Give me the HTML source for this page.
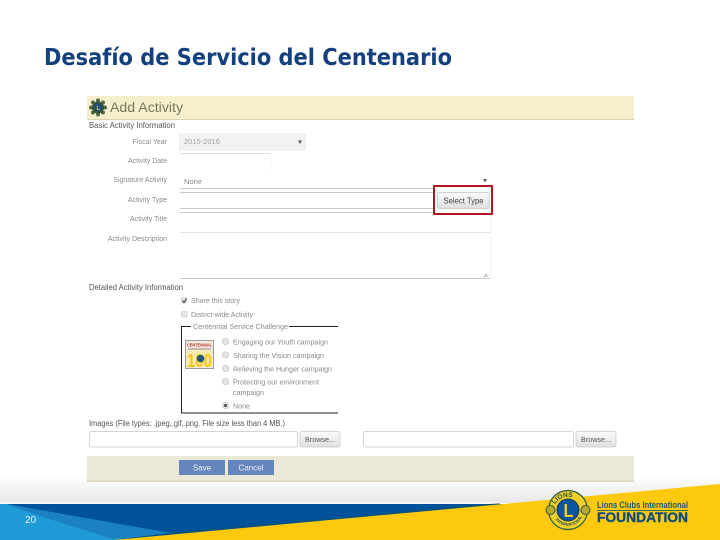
<!DOCTYPE html>
<html lang="es">
<head>
<meta charset="utf-8">
<title>Desafío de Servicio del Centenario</title>
<style>
html,body{margin:0;padding:0;background:#fff;width:720px;height:540px;overflow:hidden}
svg{display:block}
text{font-family:"Liberation Sans",sans-serif}
.l{font-size:7px;fill:#8a8a8a;text-anchor:end}
.h{font-size:8px;fill:#555}
.t{font-size:7.5px;fill:#8a8a8a}
.f{fill:#fff;stroke:#c8c8c8;stroke-width:.8}
.ln{stroke:#c9c9c9;stroke-width:1}
.fa{stroke:#f5f5f5;stroke-width:1}
.radio{fill:#e4e4e4;stroke:#c4c4c4;stroke-width:.7}
</style>
</head>
<body>
<svg width="720" height="540" viewBox="0 0 720 540" xmlns="http://www.w3.org/2000/svg">
<defs>
<linearGradient id="g" x1="0" y1="0" x2="0" y2="1">
<stop offset="0" stop-color="#ffffff"/>
<stop offset="1" stop-color="#e7e7e9"/>
</linearGradient>
<linearGradient id="btn" x1="0" y1="0" x2="0" y2="1">
<stop offset="0" stop-color="#fbfbfb"/>
<stop offset="1" stop-color="#dfdfdf"/>
</linearGradient>
<filter id="b" filterUnits="userSpaceOnUse" x="0" y="0" width="720" height="540"><feGaussianBlur stdDeviation="0.35"/></filter>
</defs>

<rect width="720" height="540" fill="#fff"/>

<text x="44" y="65" font-size="23" font-weight="700" fill="#14417e" style="font-family:'DejaVu Sans',sans-serif" textLength="408" lengthAdjust="spacingAndGlyphs">Desafío de Servicio del Centenario</text>

<!-- footer background -->
<rect x="0" y="476" width="720" height="27" fill="url(#g)"/>
<rect x="0" y="502" width="500" height="2" fill="#f7f7f7"/>
<rect x="0" y="504" width="720" height="36" fill="#00539b"/>
<polygon points="0,504 6,504 170,533 113,540 0,540" fill="#1e9ad6"/>
<polygon points="6,504 170,533 113,539 40,516" fill="#1b80c2"/>
<polygon points="113,540 720,484 720,540" fill="#fdc90c"/>
<polygon points="113,539.500 170,533 500,503 500,504 170,534" fill="#17503f" opacity=".55"/>
<text x="25" y="523" font-size="10" fill="#e6f3fb">20</text>

<g filter="url(#b)">
<!-- panel header -->
<rect x="87" y="96" width="547" height="23" fill="#f5efcd"/>
<rect x="87" y="119" width="547" height="1" fill="#d9d3b0"/>
<g fill="#4f6b3c">
<circle cx="98" cy="100.500" r="2"/><circle cx="103" cy="102.500" r="2"/><circle cx="105" cy="107.500" r="2"/><circle cx="103" cy="112.500" r="2"/><circle cx="98" cy="114.500" r="2"/><circle cx="93" cy="112.500" r="2"/><circle cx="91" cy="107.500" r="2"/><circle cx="93" cy="102.500" r="2"/>
</g>
<circle cx="98" cy="107.500" r="6" fill="#33503f"/>
<circle cx="98" cy="107.500" r="3.800" fill="#1c4f86"/>
<text x="96.500" y="110" font-size="6" font-weight="700" fill="#d8c650">L</text>
<text x="110" y="112" font-size="13.500" fill="#77775f" textLength="73" lengthAdjust="spacingAndGlyphs">Add Activity</text>

<text x="89" y="128" class="h" textLength="86" lengthAdjust="spacingAndGlyphs">Basic Activity Information</text>

<!-- labels -->
<text x="167" y="144" class="l">Fiscal Year</text>
<text x="167" y="163" class="l">Activity Date</text>
<text x="167" y="182" class="l">Signature Activity</text>
<text x="167" y="202" class="l">Activity Type</text>
<text x="167" y="221" class="l">Activity Title</text>
<text x="167" y="241" class="l">Activity Description</text>

<!-- fiscal year -->
<rect x="179.500" y="134" width="126" height="16" fill="#f2f2f2" stroke="#e3e3e3" stroke-width=".6"/>
<text x="184" y="144" font-size="7.500" fill="#a0a0a0">2015-2016</text>
<polygon points="298,140.500 302,140.500 300,144" fill="#555"/>

<!-- date -->
<line x1="180" y1="153.500" x2="270" y2="153.500" stroke="#dddddd"/>
<line x1="270.500" y1="154" x2="270.500" y2="170" class="fa"/>

<!-- signature -->
<text x="184" y="184" font-size="7.500" fill="#8a8a8a">None</text>
<polygon points="483,179 487,179 485,182.500" fill="#666"/>
<line x1="180" y1="188.500" x2="433" y2="188.500" class="ln"/>
<!-- activity type -->
<line x1="180" y1="192.500" x2="433" y2="192.500" class="ln"/>
<line x1="180" y1="208.500" x2="433" y2="208.500" class="ln"/>
<!-- activity title -->
<line x1="180" y1="212.500" x2="433" y2="212.500" class="ln"/>
<line x1="180" y1="232.500" x2="490" y2="232.500" stroke="#e2e2e2"/>
<line x1="490.500" y1="216" x2="490.500" y2="278" class="fa"/>
<!-- description -->
<line x1="180" y1="278.500" x2="490" y2="278.500" class="ln"/>
<path d="M484 277l3-3M486.500 277l1-1" stroke="#777" stroke-width=".7"/>

<!-- select type highlighted -->
<rect x="434" y="186" width="58" height="28" fill="#fff" stroke="#b3171f" stroke-width="2"/>
<rect x="437.500" y="192.500" width="52" height="16" rx="2" fill="url(#btn)" stroke="#c4c4c4" stroke-width=".8"/>
<text x="463.500" y="203.500" font-size="8" fill="#444" text-anchor="middle" textLength="40" lengthAdjust="spacingAndGlyphs">Select Type</text>

<text x="89" y="290" class="h" textLength="94" lengthAdjust="spacingAndGlyphs">Detailed Activity Information</text>

<!-- checkboxes -->
<rect x="181.500" y="297.500" width="5.500" height="5.500" fill="#e6e6e6" stroke="#c0c0c0" stroke-width=".5"/>
<path d="M182.500 300.500l1.500 2 2.500-4" fill="none" stroke="#333" stroke-width="1"/>
<text x="191" y="303" class="t" textLength="49" lengthAdjust="spacingAndGlyphs">Share this story</text>
<rect x="181.500" y="311.500" width="5.500" height="5.500" fill="#e6e6e6" stroke="#c0c0c0" stroke-width=".5"/>
<text x="191" y="317" class="t" textLength="62" lengthAdjust="spacingAndGlyphs">District-wide Activity</text>

<!-- fieldset -->
<path d="M191 326.500H181.500V413H338M289 326.500H338" fill="none" stroke="#222" stroke-width="1"/>
<text x="193" y="329" class="t" textLength="95" lengthAdjust="spacingAndGlyphs">Centennial Service Challenge</text>

<!-- badge -->
<rect x="185.500" y="340.500" width="28" height="28" fill="#f1ecdf" stroke="#9a9a9a"/>
<text x="187" y="346.500" font-size="4.500" font-weight="700" fill="#b5332a" textLength="25" lengthAdjust="spacingAndGlyphs">CENTENNIAL</text>
<rect x="188" y="348" width="23" height="2" fill="#c9b7a8"/>
<rect x="187" y="351" width="25" height="16" fill="#f7e9a8"/>
<text x="187" y="367" font-size="18" font-weight="700" fill="#f3c61f" textLength="25" lengthAdjust="spacingAndGlyphs">100</text>
<circle cx="200.500" cy="358.500" r="3.800" fill="#1d5a78"/>

<!-- radios -->
<circle cx="225.500" cy="341.500" r="3.200" class="radio"/>
<text x="233" y="344.500" class="t" textLength="95" lengthAdjust="spacingAndGlyphs">Engaging our Youth campaign</text>
<circle cx="225.500" cy="355" r="3.200" class="radio"/>
<text x="233" y="358" class="t" textLength="91" lengthAdjust="spacingAndGlyphs">Sharing the Vision campaign</text>
<circle cx="225.500" cy="368.500" r="3.200" class="radio"/>
<text x="233" y="371.500" class="t" textLength="99" lengthAdjust="spacingAndGlyphs">Relieving the Hunger campaign</text>
<circle cx="225.500" cy="381.500" r="3.200" class="radio"/>
<text x="233" y="384.500" class="t" textLength="86" lengthAdjust="spacingAndGlyphs">Protecting our environment</text>
<text x="233" y="395" class="t" textLength="31" lengthAdjust="spacingAndGlyphs">campaign</text>
<circle cx="225.500" cy="405.500" r="3.200" class="radio"/>
<circle cx="225.500" cy="405.500" r="1.600" fill="#555"/>
<text x="233" y="408.500" class="t" textLength="17" lengthAdjust="spacingAndGlyphs">None</text>

<!-- images -->
<text x="89" y="426" class="h" textLength="196" lengthAdjust="spacingAndGlyphs">Images (File types: .jpeg,.gif,.png. File size less than 4 MB.)</text>
<rect x="89.500" y="431.500" width="208" height="15.500" rx="2" class="f"/>
<rect x="300" y="431.500" width="40" height="15.500" rx="2" fill="url(#btn)" stroke="#c8c8c8" stroke-width=".7"/>
<text x="320" y="442" font-size="7.500" fill="#555" text-anchor="middle" textLength="30" lengthAdjust="spacingAndGlyphs">Browse...</text>
<rect x="363.500" y="431.500" width="210" height="15.500" rx="2" class="f"/>
<rect x="576" y="431.500" width="40" height="15.500" rx="2" fill="url(#btn)" stroke="#c8c8c8" stroke-width=".7"/>
<text x="596" y="442" font-size="7.500" fill="#555" text-anchor="middle" textLength="30" lengthAdjust="spacingAndGlyphs">Browse...</text>

<!-- actions band -->
<rect x="87" y="456" width="547" height="25" fill="#ebe8d8"/>
<rect x="87" y="480.500" width="547" height="1.500" fill="#dcd6bb"/>
<rect x="179" y="460" width="46" height="15" fill="#6585bd"/>
<text x="202" y="470.500" font-size="8" fill="#eef2fa" text-anchor="middle">Save</text>
<rect x="228" y="460" width="46" height="15" fill="#6585bd"/>
<text x="251" y="470.500" font-size="8" fill="#eef2fa" text-anchor="middle">Cancel</text>

<!-- Lions logo -->
<circle cx="568" cy="510" r="19.500" fill="#f0cf2a" stroke="#2e5a45" stroke-width="1.200"/>
<circle cx="550.500" cy="510" r="4.500" fill="#b9a92f" stroke="#2e5a45" stroke-width="1"/>
<circle cx="585.500" cy="510" r="4.500" fill="#b9a92f" stroke="#2e5a45" stroke-width="1"/>
<circle cx="568" cy="510" r="11" fill="#11559f" stroke="#1b3d4f" stroke-width="1"/>
<text x="563.500" y="517" font-size="18" font-weight="700" fill="#f5cd1d" textLength="10" lengthAdjust="spacingAndGlyphs">L</text>
<path id="arcTop" d="M553.500 508a15 15 0 0 1 29 0" fill="none"/>
<path id="arcBot" d="M554 517a15.500 15.500 0 0 0 28 0" fill="none"/>
<text font-size="6.500" font-weight="700" fill="#234f4b"><textPath href="#arcTop" startOffset="4">LIONS</textPath></text>
<text font-size="4" font-weight="700" fill="#234f4b"><textPath href="#arcBot" startOffset="3">INTERNATIONAL</textPath></text>
<text x="597" y="508" font-size="9" font-weight="700" fill="#1c5a73" textLength="91" lengthAdjust="spacingAndGlyphs">Lions Clubs International</text>
<rect x="597" y="510" width="91" height="1" fill="#3b6b5f"/>
<text x="597" y="522" font-size="13.500" font-weight="700" fill="#114f7c" stroke="#114f7c" stroke-width=".4" textLength="91" lengthAdjust="spacingAndGlyphs">FOUNDATION</text>
</g>
</svg>
</body>
</html>
